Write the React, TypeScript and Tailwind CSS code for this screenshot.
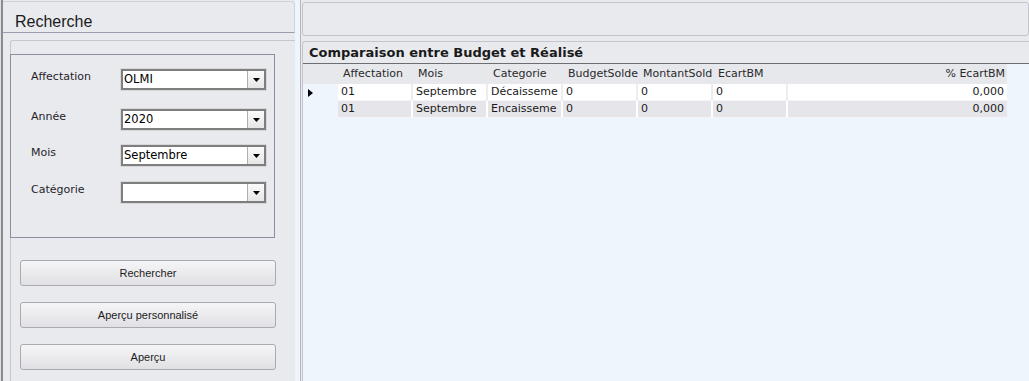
import React from 'react';

const verdana = "font-['DejaVu_Sans',Verdana,sans-serif]";
const arial = "font-['Liberation_Sans',Arial,sans-serif]";

const Combo = ({ value }: { value: string }) => (
    <div className="w-[145px] h-[21px] border-2 border-[#7e7e7e] bg-white flex items-stretch outline outline-1 outline-[#d8d8dc]">
        <div className={`flex-1 pl-[1px] text-[11.5px] leading-[17px] text-black ${verdana}`}>{value}</div>
        <div className="w-[17px] border-l border-[#b0b0b0] bg-gradient-to-b from-[#fafafa] to-[#e6e6e6] flex items-center justify-center">
            <svg width="7" height="4" viewBox="0 0 7 4"><path d="M0 0h7L3.5 4z" fill="#000" /></svg>
        </div>
    </div>
);

const Field = ({ label, value, className }: { label: string; value: string; className: string }) => (
    <div className={`flex items-start ${className}`}>
        <div className={`w-[110px] pl-[20px] pt-[1px] text-[11px] leading-[13px] text-[#1e1e2a] ${verdana}`}>{label}</div>
        <Combo value={value} />
    </div>
);

const Btn = ({ label, className }: { label: string; className: string }) => (
    <button className={`w-[256px] h-[26px] rounded-[3px] border border-[#a9a9b0] bg-gradient-to-b from-[#f5f5f7] to-[#e1e1e5] text-[11px] text-[#1c1c1c] ${arial} ${className}`}>
        {label}
    </button>
);

const cols = ['Affectation', 'Mois', 'Categorie', 'BudgetSolde', 'MontantSold', 'EcartBM'];

const rows = [
    ['01', 'Septembre', 'Décaisseme', '0', '0', '0', '0,000'],
    ['01', 'Septembre', 'Encaisseme', '0', '0', '0', '0,000'],
];

export default function App() {
    return (
        <div className="w-[1029px] h-[381px] flex bg-[#eef5fd] overflow-hidden">
            {/* left search panel */}
            <div className="w-[295px] h-full pl-px bg-[#dedee2] shrink-0">
                <div className="h-full border-l-2 border-[#8c8c90] bg-[#e9eaee] flex flex-col">
                    <div className="mt-px h-[32px] border-t border-r border-b border-t-[#d2d2d8] border-r-[#d2d2d8] border-b-[#9c9cae] rounded-tr-[4px] pl-3 pt-[12px]">
                        <div className={`text-[16px] leading-[16px] text-[#1a1a1a] ${arial}`}>Recherche</div>
                    </div>
                    <div className="flex-1 pt-[7px] pl-[7px]">
                        <div className="h-full border-t border-l border-[#c6c6ce] rounded-tl-[3px] pt-[13px]">
                            <div className="ml-[-1px] w-[265px] h-[184px] border border-[#8e8ea2]">
                                <Field label="Affectation" value="OLMI" className="mt-[14px]" />
                                <Field label="Année" value="2020" className="mt-[19px]" />
                                <Field label="Mois" value="Septembre" className="mt-[15px]" />
                                <Field label="Catégorie" value="" className="mt-[16px]" />
                            </div>
                            <div className="flex flex-col pl-[9px]">
                                <Btn label="Rechercher" className="mt-[22px]" />
                                <Btn label="Aperçu personnalisé" className="mt-[16px]" />
                                <Btn label="Aperçu" className="mt-[16px]" />
                            </div>
                        </div>
                    </div>
                </div>
            </div>

            {/* right result panel */}
            <div className="ml-[5px] flex-1 h-full border-l border-[#b6b6ba] bg-[#e9eaee] flex flex-col pt-[2px] pl-px">
                <div className="h-[34px] border border-[#c4c4cc] rounded-[3px] shrink-0" />
                <div className="mt-[5px] flex-1 border-t border-l border-[#c4c4cc] rounded-tl-[3px] flex flex-col">
                    <div className="h-[22px] border-b border-[#6e6e72] pl-[6px] pt-[3px]">
                        <div className={`text-[13px] leading-[15px] font-bold text-[#1a1a1a] ${verdana}`}>Comparaison entre Budget et Réalisé</div>
                    </div>
                    <div className={`flex-1 bg-[#eef5fd] text-[11px] ${verdana}`}>
                        <div className="w-[704px] h-[20px] flex bg-[#e7e8ec] text-[#2a2a2a] leading-[20px]">
                            <div className="w-[35px]" />
                            {cols.map((c) => (
                                <div key={c} className="w-[75px] pl-[5px] whitespace-nowrap overflow-hidden">{c}</div>
                            ))}
                            <div className="flex-1 text-right pr-[2px]">% EcartBM</div>
                        </div>
                        {rows.map((r, i) => (
                            <div key={i} className="w-[704px] h-[17px] flex leading-[16px] text-[#1a1a1a]">
                                <div className="w-[35px] flex items-center pl-[5px]">
                                    {i === 0 && (
                                        <svg width="5" height="8" viewBox="0 0 5 8"><path d="M0 0l5 4L0 8z" fill="#000" /></svg>
                                    )}
                                </div>
                                <div className={`flex-1 flex border-b border-[#f4f4f6] ${i === 0 ? 'bg-white' : 'bg-[#e6e6ea]'}`}>
                                    {r.slice(0, 6).map((v, j) => (
                                        <div key={j} className={`w-[75px] pl-[3px] whitespace-nowrap overflow-hidden border-r-2 ${i === 0 ? 'border-[#ededf0]' : 'border-white'}`}>{v}</div>
                                    ))}
                                    <div className="flex-1 text-right pr-[3px]">{r[6]}</div>
                                </div>
                            </div>
                        ))}
                    </div>
                </div>
            </div>
        </div>
    );
}
